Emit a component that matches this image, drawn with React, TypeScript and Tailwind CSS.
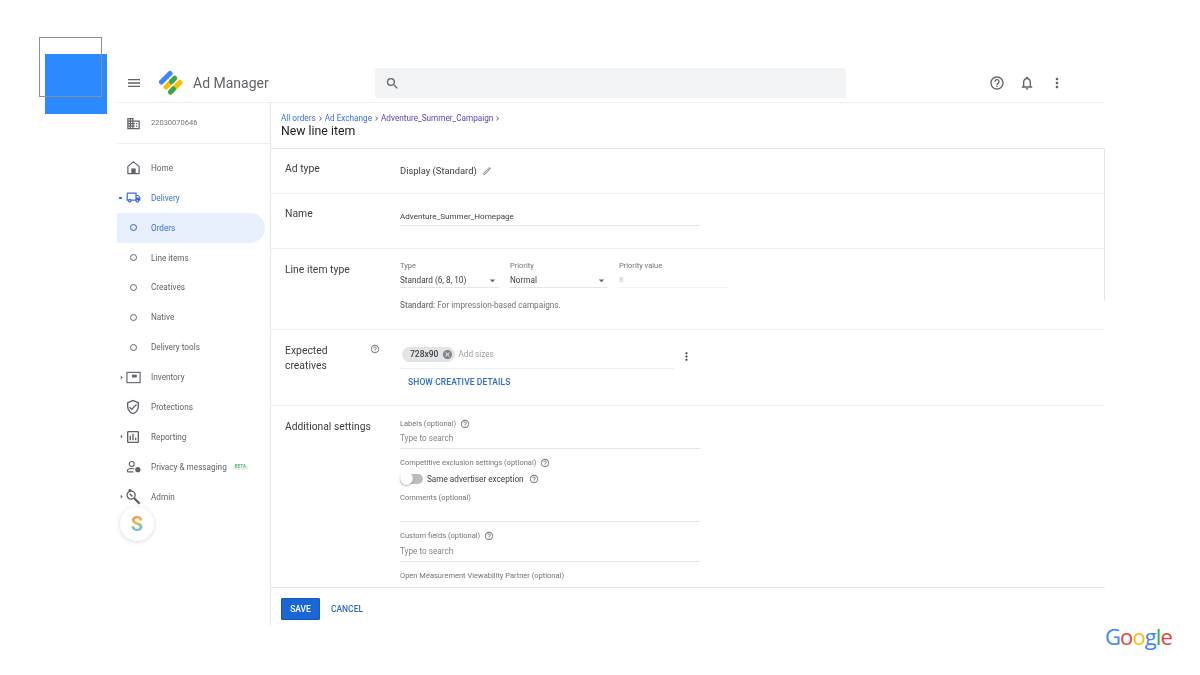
import React from "react";
import {
  MdMenu, MdSearch, MdHelpOutline, MdNotificationsNone, MdMoreVert, MdOutlineBusiness,
  MdOutlineLocalShipping, MdOutlineVerifiedUser, MdOutlineAssessment, MdCancel, MdOutlineEdit, MdArrowDropDown, MdArrowRight,
  MdChevronRight,
} from "react-icons/md";

function Logo() {
  return (
    <svg width="26" height="26" viewBox="0 0 26 26" className="shrink-0">
      <line x1="3.5" y1="12" x2="12" y2="3.5" stroke="#4285f4" strokeWidth="5" strokeLinecap="round" />
      <line x1="8" y1="17" x2="17" y2="8" stroke="#fbbc04" strokeWidth="5" strokeLinecap="round" />
      <line x1="13.5" y1="11.5" x2="16.5" y2="8.5" stroke="#34a853" strokeWidth="5" strokeLinecap="round" />
      <line x1="12.5" y1="22" x2="22" y2="12.5" stroke="#fbbc04" strokeWidth="5" strokeLinecap="round" />
      <line x1="12.5" y1="22" x2="15.5" y2="19" stroke="#34a853" strokeWidth="5" strokeLinecap="round" />
    </svg>
  );
}

function HomeIcon() {
  return (
    <svg width="15" height="15" viewBox="0 0 16 16" fill="none">
      <path d="M2 6.8 8 2l6 4.8V14.5H2z" stroke="#5f6368" strokeWidth="1.3" strokeLinejoin="round" />
      <rect x="5.7" y="9" width="4.6" height="5.5" fill="#5f6368" />
    </svg>
  );
}

function InventoryIcon() {
  return (
    <svg width="15" height="15" viewBox="0 0 16 16" fill="none">
      <rect x="1" y="2.5" width="14" height="11" stroke="#5f6368" strokeWidth="1.2" />
      <rect x="6.5" y="5" width="5" height="3" fill="#5f6368" />
    </svg>
  );
}

function PrivacyIcon() {
  return (
    <svg width="15" height="14" viewBox="0 0 17 16" fill="none">
      <circle cx="6.5" cy="4.5" r="2.8" stroke="#5f6368" strokeWidth="1.3" />
      <path d="M1.5 13.5v-1.2c0-1.6 2.6-2.6 5-2.6 1 0 2 .2 2.8.5M1.5 13.5h7" stroke="#5f6368" strokeWidth="1.3" />
      <circle cx="13.5" cy="11" r="3" fill="#5f6368" />
    </svg>
  );
}

function AdminIcon() {
  return (
    <svg width="16" height="16" viewBox="0 0 17 17" fill="none">
      <circle cx="6.5" cy="6.5" r="4.3" stroke="#5f6368" strokeWidth="1.4" />
      <path d="M6.5 2 4 .8M9.8 9.8l5.7 5.7" stroke="#5f6368" strokeWidth="2.4" />
      <path d="M5 5 8 8" stroke="#5f6368" strokeWidth="1.5" />
    </svg>
  );
}

type NavItem = {
  label: string;
  icon?: React.ReactNode;
  arrow?: "right" | "down";
  active?: boolean;
  blue?: boolean;
  sub?: boolean;
  beta?: boolean;
};

const nav: NavItem[] = [
  { label: "Home", icon: <HomeIcon /> },
  { label: "Delivery", icon: <MdOutlineLocalShipping size={15} className="text-[#3b6fd4]" />, arrow: "down", blue: true },
  { label: "Orders", sub: true, active: true, blue: true },
  { label: "Line items", sub: true },
  { label: "Creatives", sub: true },
  { label: "Native", sub: true },
  { label: "Delivery tools", sub: true },
  { label: "Inventory", icon: <InventoryIcon />, arrow: "right" },
  { label: "Protections", icon: <MdOutlineVerifiedUser size={16} /> },
  { label: "Reporting", icon: <MdOutlineAssessment size={16} />, arrow: "right" },
  { label: "Privacy & messaging", icon: <PrivacyIcon />, beta: true },
  { label: "Admin", icon: <AdminIcon />, arrow: "right" },
];

function NavRow({ item }: { item: NavItem }) {
  return (
    <div
      className={`relative flex h-[29.9px] w-[148px] items-center rounded-r-full ${item.active ? "bg-[#e8f0fe]" : ""} ${item.blue ? "text-[#3b6fd4]" : "text-[#5f6368]"}`}
    >
      <div className="mr-[2px] flex w-[32px] shrink-0 items-center justify-center">
        {item.sub ? (
          <span className={`h-[7px] w-[7px] rounded-full border-[1.5px] ${item.blue ? "border-[#2f5fc4]" : "border-[#5f6368]"}`} />
        ) : (
          item.icon
        )}
      </div>
      {item.arrow === "right" && <MdArrowRight size={9} className="absolute left-0 text-[#5f6368]" />}
      {item.arrow === "down" && <span className="absolute left-[2px] h-[1.5px] w-[3px] bg-[#3b6fd4]" />}
      <span className="text-[8.2px] leading-none">{item.label}</span>
      {item.beta && (
        <span className="ml-[6px] rounded-[2px] bg-[#e6f4ea] px-[2px] py-[1px] text-[4.5px] leading-none tracking-wide text-[#4c9a6a]">BETA</span>
      )}
    </div>
  );
}

function Help({ size = 10, className = "" }: { size?: number; className?: string }) {
  return <MdHelpOutline size={size} className={`shrink-0 text-[#70757a] ${className}`} />;
}

function FieldLabel({ children, help }: { children: React.ReactNode; help?: boolean }) {
  return (
    <div className="flex items-center gap-[4px] text-[7.5px] leading-[10px] text-[#70757a]">
      <span>{children}</span>
      {help && <Help />}
    </div>
  );
}

function Row({ label, className, children }: { label: React.ReactNode; className: string; children: React.ReactNode }) {
  return (
    <div className={`flex shrink-0 border-b border-[#eceef0] pl-[14px] ${className}`}>
      <div className="w-[115px] shrink-0 text-[10.4px] leading-[15px] text-[#3c4043]">{label}</div>
      <div className="min-w-0 flex-1">{children}</div>
    </div>
  );
}

function SelectField({ label, value, width }: { label: string; value: string; width: string }) {
  return (
    <div className={width}>
      <div className="text-[7.5px] leading-[10px] text-[#70757a]">{label}</div>
      <div className="mt-[2px] flex h-[15px] items-center justify-between border-b border-[#e4e6e8] text-[8.2px] text-[#3c4043]">
        <span>{value}</span>
        <MdArrowDropDown size={13} className="text-[#5f6368]" />
      </div>
    </div>
  );
}

export default function App() {
  return (
    <div className="relative h-[675px] w-[1200px] overflow-hidden bg-white font-['Roboto',sans-serif]">
      <div className="absolute left-[45px] top-[54px] h-[60px] w-[62px] bg-[#2b8aff]" />
      <div className="absolute left-[39px] top-[37px] h-[60px] w-[63px] border border-[#8a8f94]" />

      <div className="ml-[117px] flex w-[988px] flex-col pt-[68px] blur-[0.35px]">
        <header className="flex h-[35px] shrink-0 items-start border-b border-[#eceef0]">
          <div className="flex h-[30px] w-[258px] shrink-0 items-center">
            <MdMenu size={16} className="ml-[9px] text-[#5f6368]" />
            <div className="ml-[16px]"><Logo /></div>
            <span className="ml-[9px] pt-[1px] text-[14px] text-[#5f6368]">Ad Manager</span>
          </div>
          <div className="flex h-[30px] w-[471px] shrink-0 items-center rounded-[3px] bg-[#f1f3f4] pl-[10px]">
            <MdSearch size={15} className="text-[#5f6368]" />
          </div>
          <div className="ml-[143px] flex h-[30px] items-center gap-[14px] text-[#5f6368]">
            <MdHelpOutline size={16} />
            <MdNotificationsNone size={16} />
            <MdMoreVert size={16} />
          </div>
        </header>

        <div className="flex h-[523px]">
          <aside className="w-[154px] shrink-0 border-r border-[#e4e6e8]">
            <div className="flex h-[41px] items-center border-b border-[#eceef0] pl-[9px] text-[#5f6368]">
              <MdOutlineBusiness size={15} />
              <span className="ml-[10px] text-[7.5px] text-[#70757a]">22030070646</span>
            </div>
            <div className="flex flex-col pt-[9px]">
              {nav.map((item) => <NavRow key={item.label} item={item} />)}
            </div>
            <div className="ml-[3px] mt-[-5px] flex h-[34px] w-[34px] items-center justify-center rounded-full bg-white shadow-[0_1px_5px_rgba(0,0,0,0.15)]">
              <span className="bg-[linear-gradient(165deg,#ee8a80_15%,#fbc02d_40%,#7cc99a_60%,#8ab4f8_85%)] bg-clip-text text-[20px] font-bold leading-none text-transparent">S</span>
            </div>
          </aside>

          <main className="flex min-w-0 flex-1 flex-col">
            <div className="h-[46px] shrink-0 border-b border-[#e4e6e8] pl-[10px] pt-[10px]">
              <div className="flex items-center text-[8.2px] leading-[11px]">
                <span className="text-[#3f6fd8]">All orders</span>
                <MdChevronRight size={9} className="text-[#5f6368]" />
                <span className="text-[#3f6fd8]">Ad Exchange</span>
                <MdChevronRight size={9} className="text-[#5f6368]" />
                <span className="text-[#5a3fc0]">Adventure_Summer_Campaign</span>
                <MdChevronRight size={9} className="text-[#5f6368]" />
              </div>
              <div className="text-[12.3px] leading-[14px] text-[#202124]">New line item</div>
            </div>

            <div className="relative min-h-0 flex-1 overflow-hidden">
              <div className="absolute right-0 top-0 h-[152px] w-[1px] bg-[#e4e6e8]" />
              <Row label={<span>Ad type</span>} className="h-[45px] pt-[12px]">
                <div className="flex items-center gap-[5px] pt-[2px] text-[9.4px] leading-[15px] text-[#3c4043]">
                  <span>Display (Standard)</span>
                  <MdOutlineEdit size={10} className="text-[#80868b]" />
                </div>
              </Row>
              <Row label={<span>Name</span>} className="h-[55px] pt-[12px]">
                <div className="mt-[3px] w-[300px] border-b border-[#e4e6e8] pb-[1px] text-[8.1px] leading-[15px] text-[#3c4043]">Adventure_Summer_Homepage</div>
              </Row>
              <Row label={<span>Line item type</span>} className="h-[81px] pt-[13px]">
                <div className="mt-[-1px] flex gap-[11px]">
                  <SelectField label="Type" value="Standard (6, 8, 10)" width="w-[99px]" />
                  <SelectField label="Priority" value="Normal" width="w-[98px]" />
                  <div className="w-[110px]">
                    <div className="text-[7.5px] leading-[10px] text-[#70757a]">Priority value</div>
                    <div className="mt-[2px] flex h-[15px] items-center border-b border-[#f1f3f4] text-[8px] text-[#bdc1c6]">8</div>
                  </div>
                </div>
                <div className="mt-[11px] text-[8.2px] leading-[12px] text-[#70757a]">
                  <span className="font-medium">Standard:</span> For impression-based campaigns.
                </div>
              </Row>
              <Row label={<div className="flex w-[95px] justify-between"><span>Expected<br />creatives</span><Help className="mt-[1px]" /></div>} className="h-[76px] pt-[13px]">
                <div className="flex w-[296px] items-start">
                  <div className="flex h-[26px] w-[274px] items-start border-b border-[#eceef0] pl-[2px] pt-[4px]">
                    <div className="flex h-[15px] items-center gap-[4px] rounded-full bg-[#e3e4e6] pl-[8px] pr-[2px] text-[8.5px] font-medium text-[#3c4043]">
                      <span>728x90</span>
                      <MdCancel size={11} className="text-[#80868b]" />
                    </div>
                    <span className="ml-[3px] text-[8.2px] leading-[15px] text-[#9aa0a6]">Add sizes</span>
                  </div>
                  <MdMoreVert size={13} className="ml-[6px] mt-[7px] shrink-0 text-[#3c4043]" />
                </div>
                <div className="ml-[8px] mt-[7px] text-[8.5px] font-medium leading-[12px] tracking-[0.1px] text-[#2f6bd0]">SHOW CREATIVE DETAILS</div>
              </Row>
              <div className="flex pl-[14px] pt-[13px]">
                <div className="w-[115px] shrink-0 text-[10.3px] leading-[15px] text-[#3c4043]">Additional settings</div>
                <div className="flex w-[300px] flex-col">
                  <FieldLabel help>Labels (optional)</FieldLabel>
                  <div className="mt-[4px] h-[16px] border-b border-[#e4e6e8] text-[8.2px] leading-[11px] text-[#80868b]">Type to search</div>
                  <div className="mt-[9px]"><FieldLabel help>Competitive exclusion settings (optional)</FieldLabel></div>
                  <div className="mt-[5px] flex h-[12px] items-center">
                    <div className="relative h-[10px] w-[23px] rounded-full bg-[#bdbdbd]">
                      <span className="absolute left-0 top-[-2px] h-[13px] w-[13px] rounded-full bg-white shadow-[0_1px_2px_rgba(0,0,0,0.3)]" />
                    </div>
                    <span className="ml-[4px] text-[8.2px] text-[#3c4043]">Same advertiser exception</span>
                    <Help className="ml-[5px]" />
                  </div>
                  <div className="mt-[8px]"><FieldLabel>Comments (optional)</FieldLabel></div>
                  <div className="h-[19px] border-b border-[#e4e6e8]" />
                  <div className="mt-[9px]"><FieldLabel help>Custom fields (optional)</FieldLabel></div>
                  <div className="mt-[5px] h-[16px] border-b border-[#e4e6e8] text-[8.2px] leading-[11px] text-[#80868b]">Type to search</div>
                  <div className="mt-[9px]"><FieldLabel>Open Measurement Viewability Partner (optional)</FieldLabel></div>
                  <div className="mt-[5px] text-[8.2px] leading-[11px] text-[#80868b]">Type to search</div>
                </div>
              </div>
            </div>

            <footer className="flex h-[39px] shrink-0 items-center gap-[10px] border-t border-[#e4e6e8] pl-[10px] pt-[4px]">
              <div className="flex h-[22px] w-[39px] items-center justify-center rounded-[1px] border border-[#1558b8] bg-[#1a66d6] text-[8.5px] font-medium text-white">SAVE</div>
              <div className="flex h-[22px] w-[34px] items-center justify-center text-[8.5px] font-medium text-[#2f6bd0]">CANCEL</div>
            </footer>
          </main>
        </div>
      </div>

      <div className="absolute left-[1105px] top-[622px] font-['Open_Sans',sans-serif] text-[22px] leading-[28px] tracking-[-0.9px]">
        <span className="text-[#4285f4]">G</span>
        <span className="text-[#ea4335]">o</span>
        <span className="text-[#fbbc04]">o</span>
        <span className="text-[#4285f4]">g</span>
        <span className="text-[#34a853]">l</span>
        <span className="text-[#ea4335]">e</span>
      </div>
    </div>
  );
}
